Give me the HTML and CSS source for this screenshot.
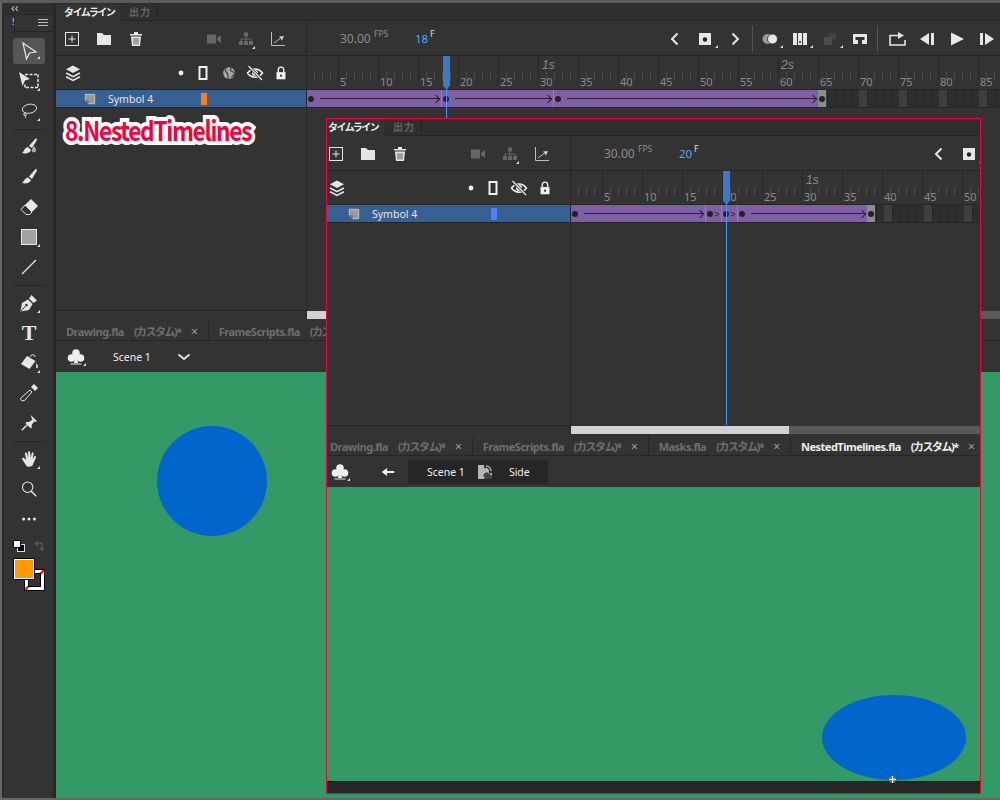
FILE: index.html
```html
<!DOCTYPE html>
<html lang="ja">
<head>
  <meta charset="UTF-8">
  <title>NestedTimelines</title>
  <link rel="stylesheet" href="styles.css">
</head>
<body>
  <svg class="sprites" width="0" height="0">
    <symbol id="i-new" viewBox="0 0 20 20"><rect x="3.500" y="3.500" width="13" height="13" fill="none" stroke="currentColor"/><path d="M10 6.500v7M6.500 10h7" stroke="currentColor"/></symbol>
    <symbol id="i-folder" viewBox="0 0 20 20"><path d="M3 4h5l2 2h7v10H3z" fill="currentColor"/></symbol>
    <symbol id="i-trash" viewBox="0 0 20 20"><path d="M4 5h12v1.500H4zM8 3h4v2H8zM5 7.500h10L14 17H6z" fill="currentColor"/><path d="M8 9v6.500M10 9v6.500M12 9v6.500" stroke="#333" stroke-width=".8"/></symbol>
    <symbol id="i-camera" viewBox="0 0 20 20"><path d="M3 5.500h9v9H3zM13 9l4-3v8l-4-3z" fill="currentColor"/></symbol>
    <symbol id="i-tree" viewBox="0 0 20 20"><path d="M8 3.500h4v4H8zM3 12h4v4H3zM8 12h4v4H8zM13 12h4v4h-4z" fill="currentColor"/><path d="M10 7.500v4.500M5 12v-2h10v2" fill="none" stroke="currentColor"/></symbol>
    <symbol id="i-graph" viewBox="0 0 20 20"><path d="M3.500 3v13.500H17" fill="none" stroke="#bbb"/><path d="M6 14l6-4.500" stroke="#bbb"/><path d="M11 7.500L16 7l-2 4.500z" fill="#ccc"/></symbol>
    <symbol id="i-layers" viewBox="0 0 20 20"><path d="M10 2.500l7 3.700-7 3.700-7-3.700z" fill="currentColor"/><path d="M3.500 9.300L10 12.700l6.500-3.400 .8 1.500L10 14.600 2.700 10.800z" fill="currentColor"/><path d="M3.500 13l6.500 3.400 6.500-3.400 .8 1.400L10 18.300 2.700 14.400z" fill="currentColor"/></symbol>
    <symbol id="i-dot" viewBox="0 0 20 20"><circle cx="10" cy="10" r="2.700" fill="currentColor"/></symbol>
    <symbol id="i-frame" viewBox="0 0 20 20"><rect x="6.500" y="4" width="7" height="12" fill="none" stroke="currentColor" stroke-width="2"/></symbol>
    <symbol id="i-globe" viewBox="0 0 20 20"><circle cx="10" cy="10" r="6.500" fill="currentColor"/><path d="M7 5c-2 3-1 3 1 5s0 4 1 6M13 4c-2 2-2 3 0 4s3 1 3 3-3 1-3 4" fill="none" stroke="#333" stroke-width="1.200"/></symbol>
    <symbol id="i-eye" viewBox="0 0 20 20"><path d="M2.500 10c4-5.500 11-5.500 15 0-4 5.500-11 5.500-15 0z" fill="none" stroke="currentColor" stroke-width="1.500"/><circle cx="10" cy="10" r="3" fill="currentColor"/><path d="M3.500 3.500l13.500 13" stroke="#333" stroke-width="3"/><path d="M3.500 3l13.500 14" stroke="currentColor" stroke-width="1.200"/></symbol>
    <symbol id="i-lock" viewBox="0 0 20 20"><path d="M5 9h10v8H5z" fill="currentColor"/><path d="M7 9V6.500a3 3 0 0 1 6 0V9" fill="none" stroke="currentColor" stroke-width="1.500"/><circle cx="10" cy="13" r="1.200" fill="#333"/></symbol>
    <symbol id="i-prev" viewBox="0 0 20 20"><path d="M12.500 4.500L7 10l5.500 5.500" fill="none" stroke="currentColor" stroke-width="2"/></symbol>
    <symbol id="i-next" viewBox="0 0 20 20"><path d="M7.500 4.500L13 10l-5.500 5.500" fill="none" stroke="currentColor" stroke-width="2"/></symbol>
    <symbol id="i-key" viewBox="0 0 20 20"><rect x="4" y="4" width="12" height="12" fill="currentColor"/><circle cx="10" cy="10.500" r="2.200" fill="#222"/></symbol>
    <symbol id="i-onion" viewBox="0 0 20 20"><circle cx="7.500" cy="10" r="5" fill="#999"/><circle cx="12.500" cy="10" r="5" fill="currentColor" stroke="#333" stroke-width=".8"/></symbol>
    <symbol id="i-columns" viewBox="0 0 20 20"><path d="M3 4h4v12H3zM8 4h4v12H8zM13 4h4v12h-4z" fill="currentColor"/><path d="M10 12v2" stroke="#222" stroke-width="1.500"/></symbol>
    <symbol id="i-stack" viewBox="0 0 20 20"><path d="M9 4h7v7H9z" fill="currentColor" opacity=".6"/><path d="M4 8h8v8H4z" fill="currentColor"/></symbol>
    <symbol id="i-loop" viewBox="0 0 20 20"><path d="M3 5h14v10h-5v-4h2.500V8h-9v3H8v4H3z" fill="currentColor"/></symbol>
    <symbol id="i-repeat" viewBox="0 0 20 20"><path d="M11 6.500H3v9.500h15v-5" fill="none" stroke="currentColor" stroke-width="1.600"/><path d="M11 3l6 3.500-6 3.500z" fill="currentColor"/></symbol>
    <symbol id="i-back" viewBox="0 0 20 20"><path d="M12 4v12L3 10z" fill="currentColor"/><path d="M14 4h3v12h-3z" fill="currentColor"/></symbol>
    <symbol id="i-play" viewBox="0 0 20 20"><path d="M4 3.500L17 10 4 16.500z" fill="currentColor"/></symbol>
    <symbol id="i-fwd" viewBox="0 0 20 20"><path d="M3 4h3v12H3z" fill="currentColor"/><path d="M8 4v12l9-6z" fill="currentColor"/></symbol>
    <symbol id="i-symbol" viewBox="0 0 14 14"><path d="M1.500 1.500h11v11h-7l-4-4z" fill="#9a9a9a" stroke="#ccc"/><path d="M1.500 8.500h4v4" fill="#666"/></symbol>
    <symbol id="i-club" viewBox="0 0 20 20"><circle cx="10" cy="6" r="3.800" fill="currentColor"/><circle cx="5.500" cy="11" r="3.800" fill="currentColor"/><circle cx="14.500" cy="11" r="3.800" fill="currentColor"/><path d="M9 9h2l1 7H8z" fill="currentColor"/><path d="M4.500 17h11" stroke="currentColor"/></symbol>
    <symbol id="i-down" viewBox="0 0 20 20"><path d="M4.500 7.500L10 12l5.500-4.500" fill="none" stroke="currentColor" stroke-width="2"/></symbol>
    <symbol id="i-left" viewBox="0 0 20 20"><path d="M3 10l6-4.500v3.300h8v2.400H9v3.300z" fill="currentColor"/></symbol>
    <symbol id="i-graphic" viewBox="0 0 16 16"><path d="M1 1h14v14H1z" fill="#b5b5b5"/><path d="M7 1h8v8h-3a5 5 0 0 0-5-5z" fill="#333"/><path d="M9 2a5 5 0 0 1 5 5M9 4.500a2.500 2.500 0 0 1 2.500 2.500" fill="none" stroke="#ddd"/><path d="M8 9l2-1 1 1.500 2-.5.500 2 1.500.5V15H7l.5-2L6 11.500z" fill="#444"/></symbol>
    <symbol id="t-select" viewBox="0 0 20 20"><path d="M4 2l13 9-6.500 1L7.500 18z" fill="none" stroke="currentColor" stroke-width="1.200"/></symbol>
    <symbol id="t-transform" viewBox="0 0 22 20"><path d="M7 3.500h13M20 3.500v13M20 16.500H7M7 16.500v-4" fill="none" stroke="currentColor" stroke-width="1.500" stroke-dasharray="3 1.500"/><path d="M1 1l11 7-5 1.500L4.500 15z" fill="currentColor"/></symbol>
    <symbol id="t-lasso" viewBox="0 0 20 20"><ellipse cx="10.500" cy="7.500" rx="8" ry="5" transform="rotate(-10 10.500 7.500)" fill="none" stroke="currentColor"/><path d="M5 12c-2 2 0 4 1.500 3s0-3-1-2 1 3 1 5" fill="none" stroke="currentColor"/></symbol>
    <symbol id="t-paint" viewBox="0 0 20 20"><path d="M17 1l-7 8 3 2 5-8z" fill="currentColor"/><path d="M9 10l3 3c-1 3-5 4-9 3 2-1 2-5 6-6z" fill="currentColor"/><path d="M15 9c2 2 3 5 1 6s-4 0-3-3z" fill="#aaa"/></symbol>
    <symbol id="t-brush" viewBox="0 0 20 20"><path d="M17 1.500l-7 8 3 2.500 5-8.500z" fill="currentColor"/><path d="M9 10.500l3 2.500c-1 3-5 4-9 3 2-1 2-4.500 6-5.500z" fill="currentColor"/></symbol>
    <symbol id="t-eraser" viewBox="0 0 20 20"><path d="M12 2l7 7-6 6-7-7z" fill="currentColor"/><path d="M6 8l7 7-2.500 2.500H7L2 12.500z" fill="#333" stroke="currentColor"/></symbol>
    <symbol id="t-rect" viewBox="0 0 20 20"><rect x="2.500" y="2.500" width="15" height="15" fill="#a3a3a3" stroke="#e6e6e6"/></symbol>
    <symbol id="t-line" viewBox="0 0 20 20"><path d="M3 17L17 3" stroke="currentColor" stroke-width="1.300"/></symbol>
    <symbol id="t-pen" viewBox="0 0 20 20"><path d="M1.500 18.500L3 10l6-3.500 4.500 4.500-3.500 6z" fill="currentColor"/><path d="M10 5.500L12.500 2 18 7.500 14.500 10z" fill="currentColor"/><path d="M2 18l5-5.500" stroke="#333"/><circle cx="7.500" cy="12" r="1.300" fill="#333"/></symbol>
    <symbol id="t-bucket" viewBox="0 0 20 20"><path d="M8 3l8.500 5-6 8L2 11z" fill="currentColor"/><path d="M11 4c1-3 5-3 5 0" fill="none" stroke="currentColor"/><path d="M17.500 10c1 2 2 4 1 5s-2-1-1-5z" fill="currentColor"/></symbol>
    <symbol id="t-dropper" viewBox="0 0 20 20"><path d="M13 3l2-2 4 4-2 2-1 1-4-4z" fill="currentColor"/><path d="M11 7l2 2-7 8c-1 1-3 1-4 0s0-2 1-3z" fill="none" stroke="currentColor"/></symbol>
    <symbol id="t-pin" viewBox="0 0 20 20"><path d="M12 1l7 7-2 1-1-1-3 4v3l-1 1-6-6 1-1h3l4-3-1-1z" fill="currentColor"/><path d="M8 12l-6 6" stroke="currentColor" stroke-width="1.500"/></symbol>
    <symbol id="t-hand" viewBox="0 0 20 20"><path d="M3 11c-2-2 0-3 1.500-2L7 11 5.500 4c0-1.500 2-1.500 2.300 0L9 9V2.500c0-1.500 2-1.500 2.200 0L12 9l1-5.500c.5-1.500 2.200-1 2 .5l-.8 6 1.800-3c1-1 2.300 0 1.700 1.200L14 17c-1 2-6 2-7 .5z" fill="currentColor"/></symbol>
    <symbol id="t-zoom" viewBox="0 0 20 20"><circle cx="8.500" cy="8" r="5.800" fill="none" stroke="currentColor" stroke-width="1.200"/><path d="M12.500 12.500l5.500 5.500" stroke="currentColor" stroke-width="1.700"/></symbol>
    <symbol id="t-dots" viewBox="0 0 20 20"><circle cx="4" cy="10" r="1.700" fill="currentColor"/><circle cx="10" cy="10" r="1.700" fill="currentColor"/><circle cx="16" cy="10" r="1.700" fill="currentColor"/></symbol>
    <symbol id="t-swap" viewBox="0 0 12 12"><path d="M2 3.500h7v6M5 1L2 3.500 5 6M7 7.500l2 3 2-3" fill="none" stroke="currentColor" stroke-width="1.400"/></symbol>
  </svg>

  <div class="app">
    <aside class="tools">
      <div class="tools-top">&lsaquo;&lsaquo;</div>
      <div class="tools-tab"><span class="tab-stub">!</span><span class="tools-menu"><span class="menu-lines"></span></span></div>
      <div class="tool tool-on more"><svg width="20" height="20"><use href="#t-select"/></svg></div>
      <div class="tool more"><svg width="22" height="20"><use href="#t-transform"/></svg></div>
      <div class="tool more"><svg width="18" height="20"><use href="#t-lasso"/></svg></div>
      <div class="tool-sep"></div>
      <div class="tool"><svg width="20" height="20"><use href="#t-paint"/></svg></div>
      <div class="tool"><svg width="20" height="20"><use href="#t-brush"/></svg></div>
      <div class="tool"><svg width="20" height="20"><use href="#t-eraser"/></svg></div>
      <div class="tool more"><svg width="20" height="20"><use href="#t-rect"/></svg></div>
      <div class="tool"><svg width="20" height="20"><use href="#t-line"/></svg></div>
      <div class="tool-sep"></div>
      <div class="tool more"><svg width="20" height="20"><use href="#t-pen"/></svg></div>
      <div class="tool tool-text">T</div>
      <div class="tool more"><svg width="20" height="20"><use href="#t-bucket"/></svg></div>
      <div class="tool"><svg width="20" height="20"><use href="#t-dropper"/></svg></div>
      <div class="tool"><svg width="18" height="18"><use href="#t-pin"/></svg></div>
      <div class="tool-sep"></div>
      <div class="tool more"><svg width="18" height="18"><use href="#t-hand"/></svg></div>
      <div class="tool"><svg width="18" height="18"><use href="#t-zoom"/></svg></div>
      <div class="tool"><svg width="18" height="18"><use href="#t-dots"/></svg></div>
      <div class="swap-row">
        <svg width="12" height="12">
          <rect x="4.500" y="4.500" width="7" height="7" fill="#000" stroke="#ddd"/>
          <rect x=".5" y=".5" width="7" height="7" fill="#fff" stroke="#000"/>
        </svg>
        <svg class="swap-icon" width="12" height="12"><use href="#t-swap"/></svg>
      </div>
      <div class="swatches">
        <svg class="stroke-swatch" width="21" height="22">
          <rect x=".5" y=".5" width="20" height="21" fill="#fff" stroke="#000"/>
          <path d="M1 21L20 1" stroke="#f00" stroke-width="2"/>
          <rect x="4.500" y="4.500" width="12" height="13" fill="#333" stroke="#000"/>
        </svg>
        <span class="fill-swatch"></span>
      </div>
    </aside>

    <section class="panel">
      <div class="tabs">
        <span class="tab tab-on">タイムライン</span>
        <span class="tab tab-off">出力</span>
      </div>

      <div class="timeline">
        <div class="cell-left bar-left">
          <span class="ic"><svg width="20" height="20"><use href="#i-new"/></svg></span>
          <span class="ic"><svg width="20" height="20"><use href="#i-folder"/></svg></span>
          <span class="ic"><svg width="20" height="20"><use href="#i-trash"/></svg></span>
          <span class="ic ic-gap dim"><svg width="20" height="20"><use href="#i-camera"/></svg></span>
          <span class="ic dim more"><svg width="20" height="20"><use href="#i-tree"/></svg></span>
          <span class="ic"><svg width="20" height="20"><use href="#i-graph"/></svg></span>
        </div>
        <div class="cell-right bar-right">
          <div class="fps">
            <span class="fps-num">30.00</span><sup class="fps-unit">FPS</sup>
            <span class="frame-num">18</span><sup class="frame-unit">F</sup>
          </div>
          <span class="cell"><svg width="20" height="20"><use href="#i-prev"/></svg></span>
          <span class="cell more"><svg width="20" height="20"><use href="#i-key"/></svg></span>
          <span class="cell"><svg width="20" height="20"><use href="#i-next"/></svg></span>
          <span class="sep"></span>
          <span class="cell more"><svg width="20" height="20"><use href="#i-onion"/></svg></span>
          <span class="cell more"><svg width="20" height="20"><use href="#i-columns"/></svg></span>
          <span class="cell more dimmer"><svg width="20" height="20"><use href="#i-stack"/></svg></span>
          <span class="cell"><svg width="20" height="20"><use href="#i-loop"/></svg></span>
          <span class="sep sep-wide"></span>
          <span class="cell"><svg width="20" height="20"><use href="#i-repeat"/></svg></span>
          <span class="cell"><svg width="20" height="20"><use href="#i-back"/></svg></span>
          <span class="cell"><svg width="20" height="20"><use href="#i-play"/></svg></span>
          <span class="cell"><svg width="20" height="20"><use href="#i-fwd"/></svg></span>
        </div>

        <div class="cell-left head-left">
          <span class="layers-ic"><svg width="20" height="20"><use href="#i-layers"/></svg></span>
          <div class="head-icons">
            <span class="hc hc-dot"><svg width="20" height="20"><use href="#i-dot"/></svg></span>
            <span class="hc"><svg width="20" height="20"><use href="#i-frame"/></svg></span>
            <span class="hc dim-globe"><svg width="18" height="18"><use href="#i-globe"/></svg></span>
            <span class="hc"><svg width="20" height="20"><use href="#i-eye"/></svg></span>
            <span class="hc"><svg width="18" height="18"><use href="#i-lock"/></svg></span>
          </div>
        </div>
        <div class="cell-right ruler">
          <div class="secs"><i class="sec-first">1s</i><i class="sec-next">2s</i></div>
          <div class="nums">
            <span>5</span><span>10</span><span>15</span><span>20</span><span>25</span><span>30</span>
            <span>35</span><span>40</span><span>45</span><span>50</span><span>55</span><span>60</span>
            <span>65</span><span>70</span><span>75</span><span>80</span><span>85</span>
          </div>
        </div>

        <div class="cell-left layer-row">
          <svg class="layer-ic" width="12" height="12"><use href="#i-symbol"/></svg>
          <span class="layer-name">Symbol 4</span>
          <span class="marker marker-orange"></span>
        </div>
        <div class="cell-right frames">
          <div class="span span-135"><b class="key"></b><span class="tween"></span></div>
          <div class="span span-112"><b class="key"></b><span class="tween"></span></div>
          <div class="span span-264"><b class="key"></b><span class="tween"></span></div>
          <div class="span-end"><b class="key"></b></div>
          <div class="empty empty-top"></div>
        </div>

        <div class="cell-left body-left">
          <div class="callout">8.NestedTimelines</div>
        </div>
        <div class="cell-right body-right"></div>

        <div class="cell-left scroll-left"></div>
        <div class="scroll"><span class="thumb thumb-top"></span></div>

        <div class="playhead playhead-top"><span class="head"></span><span class="head-line"></span></div>
      </div>

      <div class="doc-tabs">
        <span class="doc-tab">Drawing.fla<span class="doc-kana">(カスタム)*</span><em>×</em></span>
        <span class="doc-tab">FrameScripts.fla<span class="doc-kana">(カスタム)*</span><em>×</em></span>
      </div>
      <div class="edit-bar">
        <span class="club more"><svg width="20" height="20"><use href="#i-club"/></svg></span>
        <span class="scene scene-top">Scene 1</span>
        <svg class="scene-down" width="20" height="20"><use href="#i-down"/></svg>
      </div>
      <div class="stage">
        <div class="circle"></div>
      </div>
    </section>

    <!-- nested timeline window -->
    <section class="window">
      <div class="panel panel-nested">
        <div class="tabs">
          <span class="tab tab-on">タイムライン</span>
          <span class="tab tab-off">出力</span>
        </div>

        <div class="timeline">
          <div class="cell-left bar-left">
            <span class="ic"><svg width="20" height="20"><use href="#i-new"/></svg></span>
            <span class="ic"><svg width="20" height="20"><use href="#i-folder"/></svg></span>
            <span class="ic"><svg width="20" height="20"><use href="#i-trash"/></svg></span>
            <span class="ic ic-gap dim"><svg width="20" height="20"><use href="#i-camera"/></svg></span>
            <span class="ic dim more"><svg width="20" height="20"><use href="#i-tree"/></svg></span>
            <span class="ic"><svg width="20" height="20"><use href="#i-graph"/></svg></span>
          </div>
          <div class="cell-right bar-right">
            <div class="fps">
              <span class="fps-num">30.00</span><sup class="fps-unit">FPS</sup>
              <span class="frame-num">20</span><sup class="frame-unit">F</sup>
            </div>
            <span class="cell"><svg width="20" height="20"><use href="#i-prev"/></svg></span>
            <span class="cell more"><svg width="20" height="20"><use href="#i-key"/></svg></span>
          </div>

          <div class="cell-left head-left">
            <span class="layers-ic"><svg width="20" height="20"><use href="#i-layers"/></svg></span>
            <div class="head-icons">
              <span class="hc hc-dot"><svg width="20" height="20"><use href="#i-dot"/></svg></span>
              <span class="hc"><svg width="20" height="20"><use href="#i-frame"/></svg></span>
              <span class="hc"><svg width="20" height="20"><use href="#i-eye"/></svg></span>
              <span class="hc"><svg width="18" height="18"><use href="#i-lock"/></svg></span>
            </div>
          </div>
          <div class="cell-right ruler">
            <div class="secs"><i class="sec-first">1s</i></div>
            <div class="nums">
              <span>5</span><span>10</span><span>15</span><span>20</span><span>25</span><span>30</span>
              <span>35</span><span>40</span><span>45</span><span>50</span>
            </div>
          </div>

          <div class="cell-left layer-row">
            <svg class="layer-ic" width="12" height="12"><use href="#i-symbol"/></svg>
            <span class="layer-name">Symbol 4</span>
            <span class="marker marker-blue"></span>
          </div>
          <div class="cell-right frames">
            <div class="span span-135"><b class="key"></b><span class="tween"></span></div>
            <div class="span span-16"><b class="key"></b><span class="gt">&gt;</span></div>
            <div class="span span-16"><b class="key"></b><span class="gt">&gt;</span></div>
            <div class="span span-129"><b class="key"></b><span class="tween"></span></div>
            <div class="span-end"><b class="key"></b></div>
            <div class="empty empty-nested"></div>
          </div>

          <div class="cell-left body-left"></div>
          <div class="cell-right body-right"></div>

          <div class="cell-left scroll-left"></div>
          <div class="scroll"><span class="thumb thumb-nested"></span></div>

          <div class="playhead playhead-nested"><span class="head"></span><span class="head-line"></span></div>
        </div>

        <div class="doc-tabs">
          <span class="doc-tab">Drawing.fla<span class="doc-kana">(カスタム)*</span><em>×</em></span>
          <span class="doc-tab">FrameScripts.fla<span class="doc-kana">(カスタム)*</span><em>×</em></span>
          <span class="doc-tab">Masks.fla<span class="doc-kana">(カスタム)*</span><em>×</em></span>
          <span class="doc-tab doc-tab-on">NestedTimelines.fla<span class="doc-kana">(カスタム)*</span><em>×</em></span>
        </div>
        <div class="edit-bar">
          <span class="club more"><svg width="20" height="20"><use href="#i-club"/></svg></span>
          <svg class="back-ic" width="18" height="18"><use href="#i-left"/></svg>
          <div class="crumbs">
            <span class="scene">Scene 1</span>
            <svg class="crumb-ic" width="16" height="16"><use href="#i-graphic"/></svg>
            <span class="scene">Side</span>
          </div>
        </div>
        <div class="stage">
          <div class="ellipse"></div>
          <div class="crosshair"></div>
        </div>
        <div class="status"></div>
      </div>
    </section>
  </div>
</body>
</html>
```

FILE: styles.css
```css
* {
  box-sizing: border-box;
}

body {
  margin: 0;
  background: #333;
  font-family: "Noto Sans", "Noto Sans CJK JP", sans-serif;
  color: #e6e6e6;
}

.sprites {
  display: block;
}

.app {
  position: relative;
  display: flex;
  width: 1000px;
  height: 800px;
  overflow: hidden;
  background: #333;
  border-top: 3px solid #5c5c5c;
  border-bottom: 2px solid #666;
}

svg {
  display: block;
}

/* tools */
.tools {
  width: 56px;
  flex: none;
  background: #333;
  border-left: 2px solid #666;
  border-right: 3px solid #282828;
  box-shadow: inset 2px 0 0 #2a2a2a;
  color: #e6e6e6;
}

.tools-top {
  height: 12px;
  padding-left: 9px;
  background: #2e2e2e;
  border-bottom: 1px solid #262626;
  font-size: 12px;
  line-height: 9px;
  color: #ccc;
}

.tools-tab {
  display: flex;
  height: 21px;
}

.tab-stub {
  width: 13px;
  padding-left: 10px;
  border-right: 1px solid #262626;
  font-size: 9px;
  line-height: 14px;
  color: #ddd;
}

.tools-menu {
  flex: 1;
  height: 17px;
  padding: 4px 0 0 23px;
  border-bottom: 1px solid #262626;
}

.menu-lines {
  display: block;
  width: 10px;
  height: 7px;
  border-top: 1px solid #bbb;
  border-bottom: 1px solid #bbb;
  background: linear-gradient(#bbb, #bbb) 0 2px / 100% 1px no-repeat;
}

.tool {
  position: relative;
  display: flex;
  align-items: center;
  justify-content: center;
  height: 30px;
  width: 32px;
  margin-left: 11px;
}

.tool-on {
  height: 26px;
  margin: 2px 0 2px 11px;
  background: #555;
  border-radius: 3px;
}

.tool-sep {
  height: 1px;
  margin: 3px 7px 2px 11px;
  background: #262626;
}

.tool-text {
  font-family: "Liberation Serif", serif;
  font-weight: bold;
  font-size: 22px;
}

.more::after {
  content: "";
  position: absolute;
  right: 5px;
  bottom: 5px;
  border-style: solid;
  border-width: 0 0 3px 3px;
  border-color: transparent transparent #ddd transparent;
}

.swap-row {
  display: flex;
  align-items: center;
  height: 16px;
  margin: 4px 0 0 11px;
}

.swap-icon {
  margin-left: 8px;
  color: #555;
}

.swatches {
  position: relative;
  height: 34px;
  margin: 5px 0 0 12px;
}

.fill-swatch {
  position: absolute;
  left: 0;
  top: 0;
  width: 20px;
  height: 20px;
  background: #f90;
  border: 1px solid #fff;
  outline: 1px solid #000;
}

.stroke-swatch {
  position: absolute;
  left: 10px;
  top: 10px;
}

/* panel */
.panel {
  display: flex;
  flex-direction: column;
  flex: 1;
  min-width: 0;
  border-top: 1px solid #2a2a2a;
}

.tabs {
  display: flex;
  height: 17px;
  flex: none;
  background: #2f2f2f;
  border-bottom: 1px solid #262626;
  white-space: nowrap;
}

.tab {
  font-family: "Noto Sans CJK JP", sans-serif;
  font-size: 10px;
  font-weight: 700;
  line-height: 15px;
  color: #666;
  border-right: 1px solid #262626;
}

.tab-on {
  width: 66px;
  height: 17px;
  padding-left: 8px;
  letter-spacing: -1.500px;
  color: #eee;
  background: #333;
}

.tab-off {
  width: 36px;
  padding-left: 7px;
  letter-spacing: 1px;
}

.timeline {
  position: relative;
  display: grid;
  grid-template-columns: 251px 1fr;
  grid-template-rows: 35px 34px 18px 202px 9px;
  flex: none;
  overflow: hidden;
}

.cell-left {
  border-right: 1px solid #262626;
}

.cell-right {
  min-width: 0;
}

.bar-left,
.bar-right {
  display: flex;
  align-items: center;
  padding-top: 1px;
  border-bottom: 1px solid #262626;
}

.ic {
  position: relative;
  display: flex;
  justify-content: center;
  width: 32px;
  color: #e6e6e6;
}

.ic-gap {
  margin-left: 46px;
}

.ic.more::after {
  right: 7px;
  bottom: 0;
}

.dim {
  color: #666;
}

.fps {
  display: flex;
  align-items: center;
  flex: none;
  width: 353px;
  padding-left: 33px;
}

.fps-num {
  width: 34px;
  font-size: 12px;
  color: #8c8c8c;
}

.fps-unit {
  width: 41px;
  font-size: 8.500px;
  line-height: 8px;
  margin-top: -9px;
  color: #8c8c8c;
}

.frame-num {
  width: 15px;
  font-size: 11.500px;
  color: #55a5f5;
}

.frame-unit {
  font-size: 9px;
  line-height: 8px;
  margin-top: -9px;
  color: #ddd;
}

.cell {
  position: relative;
  display: flex;
  justify-content: center;
  width: 30px;
  flex: none;
}

.cell.more::after {
  right: 2px;
  bottom: 1px;
}

.dimmer {
  color: #4d4d4d;
}

.sep {
  width: 1px;
  height: 26px;
  flex: none;
  margin: 0 2px;
  background: #555;
}

.sep-wide {
  margin-right: 4px;
}

.head-left {
  display: flex;
  align-items: center;
  padding-left: 7px;
  border-bottom: 1px solid #262626;
}

.head-icons {
  display: flex;
  margin-left: auto;
  padding-right: 12px;
}

.hc {
  display: flex;
  justify-content: center;
  align-items: center;
  width: 26px;
  color: #f0f0f0;
}

.hc-dot {
  width: 18px;
}

.dim-globe {
  color: #a6a6a6;
}

.ruler {
  border-bottom: 1px solid #262626;
  background:
    linear-gradient(90deg, #262626 1px, transparent 1px) 31px 0 / 40px 24px repeat-x,
    linear-gradient(90deg, #4a4a4a 1px, transparent 1px) 7px 16px / 8px 8px repeat-x;
}

.secs {
  display: flex;
  height: 17px;
  padding: 0 0 0 235px;
  font-family: "Liberation Sans", sans-serif;
  font-size: 12px;
  line-height: 18px;
  color: #8c8c8c;
}

.sec-first {
  width: 239px;
}

.nums {
  display: flex;
  padding-left: 33px;
  margin-top: 1px;
  overflow: hidden;
}

.nums span {
  width: 40px;
  flex: none;
  font-size: 11px;
  line-height: 15px;
  color: #8c8c8c;
}

/* layer row */
.layer-row {
  display: flex;
  align-items: center;
  background: #366092;
  border-bottom: 1px solid #262626;
}

.layer-ic {
  margin-left: 28px;
}

.layer-name {
  width: 93px;
  margin-left: 12px;
  font-size: 10.500px;
  color: #e6e6e6;
}

.marker {
  width: 6px;
  height: 12px;
}

.marker-orange {
  background: #ff7f0e;
}

.marker-blue {
  margin-left: 26px;
  background: #4d7fff;
}

.frames {
  display: flex;
  height: 18px;
  padding-bottom: 1px;
  background: #262626;
  overflow: hidden;
}

.span {
  display: flex;
  align-items: center;
  flex: none;
  padding: 0 2px 0 1px;
  background: #7f5fa3;
  border-right: 1px solid #9a80b8;
}

.span-135 { width: 135px; }
.span-112 { width: 112px; }
.span-264 { width: 264px; border-right: 0; }
.span-16 { width: 16px; padding: 0 0 0 1px; }
.span-129 { width: 129px; border-right: 0; }

.key {
  width: 6px;
  height: 6px;
  flex: none;
  background: #222;
  border-radius: 50%;
}

.tween {
  position: relative;
  flex: 1;
  height: 1px;
  margin-left: 6px;
  background: #2a1f36;
}

.tween::after {
  content: "";
  position: absolute;
  right: 0;
  top: -2px;
  width: 5px;
  height: 5px;
  border-top: 1px solid #2a1f36;
  border-right: 1px solid #2a1f36;
  transform: rotate(45deg);
}

.gt {
  margin-left: 1px;
  font-size: 10px;
  line-height: 10px;
  color: #2a1f36;
}

.span-end {
  display: flex;
  align-items: center;
  justify-content: center;
  width: 8px;
  flex: none;
  background: #8c8c8c;
}

.empty {
  flex: 1;
  background:
    linear-gradient(90deg, #3e3e3e 8px, transparent 8px) 33px 0 / 40px 100%,
    linear-gradient(90deg, #242424 1px, #2e2e2e 1px) 1px 0 / 8px 100%;
}

.empty-nested {
  background-position: 9px 0, 1px 0;
}

.callout {
  width: 230px;
  margin: 4px 0 0 9px;
  font-family: "Noto Sans CJK JP", sans-serif;
  font-size: 27px;
  font-weight: 700;
  line-height: 36px;
  letter-spacing: -1.500px;
  color: #f5003c;
  -webkit-text-stroke: 8px #fff;
  paint-order: stroke fill;
  white-space: nowrap;
  transform: scaleX(0.84);
  transform-origin: left;
}

.scroll-left {
  border-top: 1px solid #262626;
}

.scroll {
  margin-top: 1px;
  background: #5a5a5a;
}

.thumb {
  display: block;
  height: 100%;
  background: #d2d2d2;
}

.thumb-top { width: 60px; }
.thumb-nested { width: 218px; }

.playhead {
  position: absolute;
  top: 35px;
  bottom: 9px;
  width: 7px;
}

.playhead-top { left: 387px; }
.playhead-nested { left: 403px; }

.head {
  display: block;
  height: 34px;
  background: #3a7bc8;
  clip-path: polygon(0 0, 100% 0, 100% 86%, 50% 100%, 0 86%);
}

.head-line {
  position: absolute;
  left: 3px;
  top: 33px;
  bottom: 0;
  width: 1px;
  background: #3f9aff;
}

/* document tabs */
.doc-tabs {
  display: flex;
  height: 19px;
  flex: none;
  margin-top: 3px;
  border-bottom: 1px solid #262626;
  white-space: nowrap;
}

.doc-tab {
  display: flex;
  align-items: center;
  flex: none;
  padding: 0 10px;
  font-family: "Noto Sans", "Noto Sans CJK JP", sans-serif;
  font-size: 11px;
  font-weight: 700;
  letter-spacing: -0.500px;
  color: #6e6e6e;
  border-right: 1px solid #262626;
}

.doc-kana {
  margin-left: 10px;
  letter-spacing: -1.500px;
}

.doc-tab em {
  margin-left: 10px;
  font-style: normal;
  font-weight: 400;
  font-size: 13px;
  color: #999;
}

.doc-tab-on {
  color: #eee;
}

.edit-bar {
  display: flex;
  align-items: center;
  height: 31px;
  flex: none;
  padding-left: 10px;
}

.club {
  position: relative;
  display: block;
  width: 20px;
  height: 20px;
  color: #eee;
}

.club.more::after {
  right: 0;
  bottom: 1px;
}

.scene {
  font-size: 10.500px;
  color: #eee;
}

.scene-top {
  margin-left: 27px;
}

.scene-down {
  margin-left: 23px;
  color: #ddd;
}

.back-ic {
  margin-left: 29px;
  color: #eee;
}

.crumbs {
  display: flex;
  align-items: center;
  width: 140px;
  height: 24px;
  margin-left: 11px;
  padding-left: 19px;
  background: #262626;
  border-radius: 1px;
}

.crumb-ic {
  margin: 0 16px 0 12px;
}

.stage {
  position: relative;
  flex: 1;
  background: #339966;
}

.circle {
  position: absolute;
  left: 101px;
  top: 54px;
  width: 110px;
  height: 110px;
  border-radius: 50%;
  background: #0066cc;
}

/* nested window sits on top of the main one */
.window {
  position: absolute;
  left: 326px;
  top: 115px;
  width: 655px;
  height: 676px;
  overflow: hidden;
  border: 1px solid #f00038;
  background: #333;
}

.panel-nested {
  width: 660px;
  height: 100%;
  margin-left: -7px;
  border-top: 0;
}

.ellipse {
  position: absolute;
  left: 502px;
  top: 208px;
  width: 144px;
  height: 85px;
  border-radius: 50%;
  background: #0066cc;
}

.crosshair {
  position: absolute;
  left: 569px;
  top: 289px;
  width: 7px;
  height: 7px;
  border-radius: 50%;
  background:
    linear-gradient(#fff, #fff) 50% 50% / 1px 100% no-repeat,
    linear-gradient(#fff, #fff) 50% 50% / 100% 1px no-repeat,
    #777;
}

.status {
  height: 12px;
  flex: none;
  background: #262626;
  border-top: 1px solid #111;
}
```
